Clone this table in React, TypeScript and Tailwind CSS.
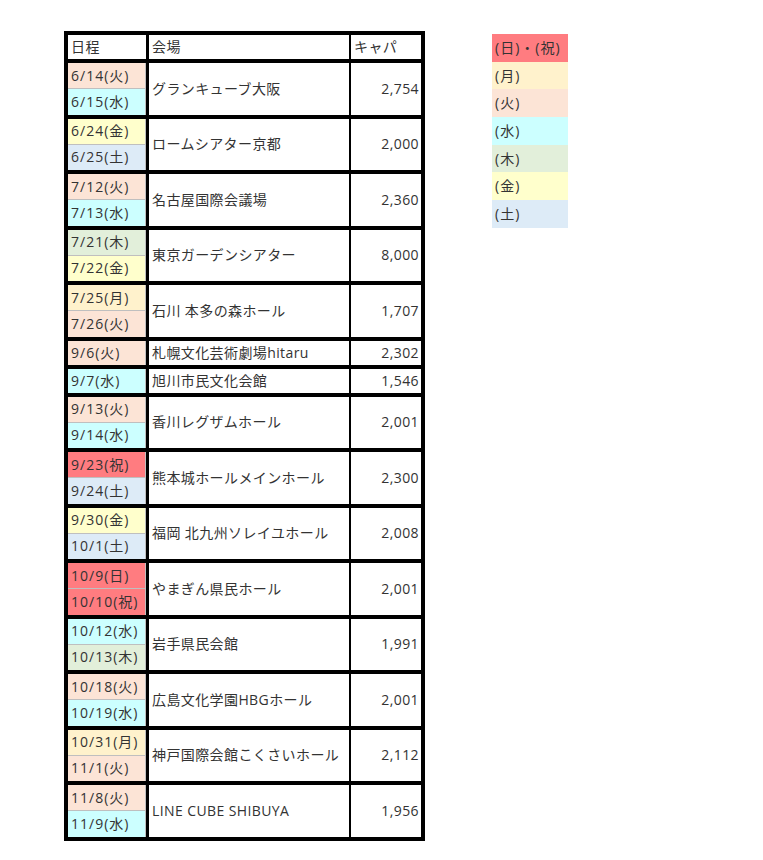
import React from 'react';

type Day = 'hol' | 'mon' | 'tue' | 'wed' | 'thu' | 'fri' | 'sat';

interface Group {
  dates: [string, Day][];
  venue: string;
  cap: string;
}

const dayBg: Record<Day, string> = {
  hol: 'bg-[#ff7c80]',
  mon: 'bg-[#fff2cc]',
  tue: 'bg-[#fce4d6]',
  wed: 'bg-[#ccffff]',
  thu: 'bg-[#e2efda]',
  fri: 'bg-[#ffffcc]',
  sat: 'bg-[#ddebf7]',
};

const groups: Group[] = [
  { dates: [['6/14(火)', 'tue'], ['6/15(水)', 'wed']], venue: 'グランキューブ大阪', cap: '2,754' },
  { dates: [['6/24(金)', 'fri'], ['6/25(土)', 'sat']], venue: 'ロームシアター京都', cap: '2,000' },
  { dates: [['7/12(火)', 'tue'], ['7/13(水)', 'wed']], venue: '名古屋国際会議場', cap: '2,360' },
  { dates: [['7/21(木)', 'thu'], ['7/22(金)', 'fri']], venue: '東京ガーデンシアター', cap: '8,000' },
  { dates: [['7/25(月)', 'mon'], ['7/26(火)', 'tue']], venue: '石川 本多の森ホール', cap: '1,707' },
  { dates: [['9/6(火)', 'tue']], venue: '札幌文化芸術劇場hitaru', cap: '2,302' },
  { dates: [['9/7(水)', 'wed']], venue: '旭川市民文化会館', cap: '1,546' },
  { dates: [['9/13(火)', 'tue'], ['9/14(水)', 'wed']], venue: '香川レグザムホール', cap: '2,001' },
  { dates: [['9/23(祝)', 'hol'], ['9/24(土)', 'sat']], venue: '熊本城ホールメインホール', cap: '2,300' },
  { dates: [['9/30(金)', 'fri'], ['10/1(土)', 'sat']], venue: '福岡 北九州ソレイユホール', cap: '2,008' },
  { dates: [['10/9(日)', 'hol'], ['10/10(祝)', 'hol']], venue: 'やまぎん県民ホール', cap: '2,001' },
  { dates: [['10/12(水)', 'wed'], ['10/13(木)', 'thu']], venue: '岩手県民会館', cap: '1,991' },
  { dates: [['10/18(火)', 'tue'], ['10/19(水)', 'wed']], venue: '広島文化学園HBGホール', cap: '2,001' },
  { dates: [['10/31(月)', 'mon'], ['11/1(火)', 'tue']], venue: '神戸国際会館こくさいホール', cap: '2,112' },
  { dates: [['11/8(火)', 'tue'], ['11/9(水)', 'wed']], venue: 'LINE CUBE SHIBUYA', cap: '1,956' },
];

const legend: [string, Day][] = [
  ['(日)・(祝)', 'hol'],
  ['(月)', 'mon'],
  ['(火)', 'tue'],
  ['(水)', 'wed'],
  ['(木)', 'thu'],
  ['(金)', 'fri'],
  ['(土)', 'sat'],
];

function ScheduleRow({ group }: { group: Group }) {
  const single = group.dates.length === 1;
  return (
    <div className="flex border-t-4 border-black">
      <div className="w-[78px] flex flex-col">
        {group.dates.map(([label, day], i) => (
          <div
            key={label}
            className={`${single ? 'h-[24px]' : i > 0 ? 'h-[26.25px] border-t border-[#a6a6a6]' : 'h-[25.25px]'} ${
              dayBg[day]
            } border-r border-[#bfbfbf] flex items-center pl-[3px] leading-none tracking-[1px]`}
          >
            {label}
          </div>
        ))}
      </div>
      <div className="w-[203px] border-l-[3px] border-black flex items-center pl-[3px] leading-none">
        {group.venue}
      </div>
      <div className="w-[72px] border-l-2 border-black flex items-center justify-end pr-[2px] leading-none">
        {group.cap}
      </div>
    </div>
  );
}

export default function App() {
  return (
    <div
      className="w-[763px] min-h-[860px] bg-white text-[14px] tracking-[0.4px] text-[#333]"
      style={{ fontFamily: '"Open Sans", "Noto Sans CJK JP", sans-serif' }}
    >
      <div className="flex items-start pt-[31px] pl-[64px]">
        <div className="w-[361px] border-4 border-black">
          <div className="flex h-[24px]">
            <div className="w-[78px] flex items-center pl-[3px] leading-none">日程</div>
            <div className="w-[203px] border-l-[3px] border-black flex items-center pl-[3px] leading-none">
              会場
            </div>
            <div className="w-[72px] border-l-2 border-black flex items-center pl-[3px] leading-none">
              キャパ
            </div>
          </div>
          {groups.map((g) => (
            <ScheduleRow key={g.venue} group={g} />
          ))}
        </div>
        <div className="ml-[67px] mt-[3px] w-[76px] flex flex-col">
          {legend.map(([label, day]) => (
            <div
              key={label}
              className={`h-[27.7px] ${dayBg[day]} flex items-center pl-[3px] leading-none tracking-[1px]`}
            >
              {label}
            </div>
          ))}
        </div>
      </div>
    </div>
  );
}
